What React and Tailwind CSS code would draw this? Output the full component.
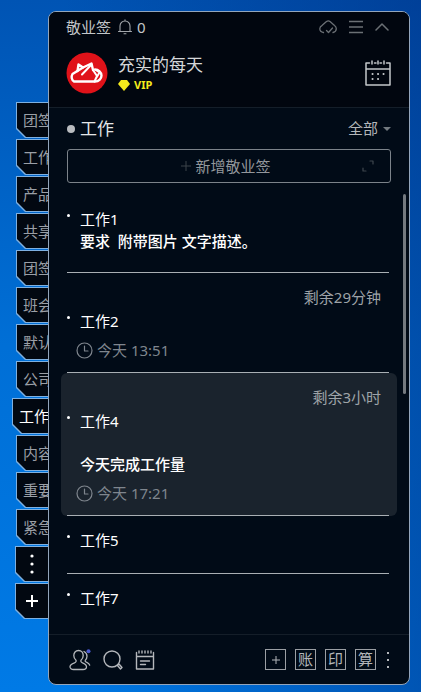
import React, { useState } from 'react';
import clsx from 'clsx';

const folders = ['团签', '工作', '产品', '共享', '团签', '班会', '默认', '公司', '工作', '内容', '重要', '紧急'];

const notes = [
  { id: 1, title: '工作1', body: '要求  附带图片 文字描述。' },
  { id: 2, title: '工作2', left: '剩余29分钟', time: '今天 13:51' },
  { id: 4, title: '工作4', body: '今天完成工作量', left: '剩余3小时', time: '今天 17:21', selected: true },
  { id: 5, title: '工作5' },
  { id: 7, title: '工作7' },
];

function Icon({ children, className, box = 24, stroke = 1.3 }) {
  return (
    <svg
      viewBox={`0 0 ${box} ${box}`}
      className={className}
      fill="none"
      stroke="currentColor"
      strokeWidth={stroke}
      strokeLinecap="round"
      strokeLinejoin="round"
      aria-hidden="true"
    >
      {children}
    </svg>
  );
}

function SideTab({ active, wide, label, onClick, children }) {
  return (
    <button
      onClick={onClick}
      aria-label={label}
      className={clsx(
        'h-9 shrink-0 bg-[#7fb0e0] p-px pr-0 text-[15px]',
        '[clip-path:polygon(0_0,100%_0,100%_100%,9px_100%,0_calc(100%-9px))]',
        active ? 'w-9 text-white' : wide ? 'w-[33px] text-white' : 'w-8 text-[#9a9fa6]'
      )}
    >
      <span
        className={clsx(
          'flex h-full items-center overflow-hidden bg-[#020811] whitespace-nowrap',
          '[clip-path:polygon(0_0,100%_0,100%_100%,9px_100%,0_calc(100%-9px))]',
          wide ? 'justify-center' : 'pl-1.5'
        )}
      >
        {children}
      </span>
    </button>
  );
}

function Note({ note }) {
  return (
    <li className={clsx('mx-3 rounded-md', note.selected && 'bg-[#1a232d]')}>
      <div className={clsx('mr-2 ml-1.5 border-[#a9afb4]', note.id !== 7 && 'border-b')}>
        {note.left && (
          <p className="pt-3 pr-2 text-right leading-6 text-[#9ea3a8]">{note.left}</p>
        )}
        <div className={clsx('flex', note.left ? 'pt-px pb-1.5' : note.body ? 'pt-[25px] pb-5' : 'pt-[13px] pb-[22px]')}>
          <span className="mt-1.5 h-[3px] w-[3px] rounded-full bg-white" />
          <div className="ml-2.5 text-white">
            <h3 className="leading-[22px]">{note.title}</h3>
            {note.body && (
              <p className={clsx('leading-[22px] font-medium whitespace-pre', note.left && 'mt-[21px]')}>
                {note.body}
              </p>
            )}
          </div>
        </div>
        {note.time && (
          <p className="flex items-center gap-1 pb-2.5 pl-[9px] leading-6 text-[#7f868e]">
            <Icon className="size-[17px]" box={17} stroke={1.2}>
              <circle cx="8.5" cy="8.5" r="7.5" />
              <path d="M8.5 4v5H12" />
            </Icon>
            {note.time}
          </p>
        )}
      </div>
    </li>
  );
}

function App() {
  const [tab, setTab] = useState(8);
  const [filter, setFilter] = useState('all');

  return (
    <div className="flex min-h-screen items-stretch bg-[linear-gradient(to_right,transparent_15%,rgba(0,40,120,0.45)),linear-gradient(to_bottom,#0054b4,#006fd6_50%,#007ae6)] text-[15px] font-['Noto_Sans','Noto_Sans_CJK_SC',sans-serif]">
      <nav className="flex w-12 shrink-0 flex-col items-end gap-px pt-[102px]">
        {folders.map((name, i) => (
          <SideTab key={i} active={tab === i} onClick={() => setTab(i)}>
            {name}
          </SideTab>
        ))}
        <div className="flex flex-col gap-px">
          <SideTab wide label="更多">
            <svg viewBox="0 0 4 20" className="h-5 w-1" fill="currentColor">
              <circle cx="2" cy="2" r="1.6" />
              <circle cx="2" cy="10" r="1.6" />
              <circle cx="2" cy="18" r="1.6" />
            </svg>
          </SideTab>
          <SideTab wide label="新建">
            <svg viewBox="0 0 12 12" className="size-3" stroke="currentColor" strokeWidth="2">
              <path d="M6 0v12M0 6h12" />
            </svg>
          </SideTab>
        </div>
      </nav>

      <div className="flex grow pt-[11px] pr-[11px] pb-[7px]">
        <main className="flex grow flex-col rounded-lg border border-[#93a5bb] bg-[#010b17]">
          <header className="rounded-t-[7px] border-b border-[#141e29] bg-[#01060f] pr-[18px] pl-[17px]">
            <div className="flex h-[30px] items-center pr-0.5 text-[#c3c6c9]">
              <h1>敬业签</h1>
              <button className="ml-1.5 flex items-center gap-1">
                <Icon className="size-4 text-[#a2a6ab]" box={16} stroke={1.1}>
                  <path d="M3 12.5V7a5 5 0 0 1 10 0v5.5M1.5 12.5h13M8 .8V2M7 14.8h2" />
                </Icon>
                0
              </button>
              <div className="ml-auto flex items-center gap-3 text-[#6b7075]">
                <button aria-label="同步">
                  <Icon className="size-[18px]" box={18} stroke={1.3}>
                    <path d="M4.5 14.5C2 14 .8 12.5.8 10.7c0-1.6 1-2.700 2.400-3.400L7.500 3.500c1-.8 2.500-.8 3.500 0l4.500 4c1.200.8 1.800 1.900 1.800 3.200 0 1.900-1.200 3.300-3.300 3.800M7.500 12.500l2 2 4-4.500" />
                  </Icon>
                </button>
                <button aria-label="菜单">
                  <Icon className="size-3.5" box={14}>
                    <path d="M0 1.5h14M0 7h14M0 12.5h14" />
                  </Icon>
                </button>
                <button aria-label="收起">
                  <Icon className="size-3.5" box={14} stroke={1.5}>
                    <path d="M1 10l6-6 6 6" />
                  </Icon>
                </button>
              </div>
            </div>
            <div className="flex h-[65px] items-center pb-[3px]">
              <svg viewBox="0 0 42 42" className="size-[42px]" aria-hidden="true">
                <circle cx="21" cy="21" r="20.5" fill="#e01219" />
                <g fill="none" stroke="#fff" strokeWidth="2.4" strokeLinejoin="round" strokeLinecap="round">
                  <path d="M11.500 19 12.500 12.500 17 15.500 25.500 11.500 27 18" />
                  <path d="M17 15.500 6.500 22c-1.500 2.500-1 6 1.500 7.500h21c4 0 6.500-3 6.500-6 0-3-3-6-6.500-6" />
                  <path d="M25.500 12.500 16 22.500M27 18l4 6-2.500 5.500M30 18l3.500 2.500-3 5" strokeWidth="2" />
                </g>
              </svg>
              <div className="ml-2.5">
                <h2 className="text-[17px] leading-6 text-[#d5d7d9]">充实的每天</h2>
                <p className="flex items-center gap-1 text-[11px] leading-4 font-bold text-[#f5ea1c]">
                  <svg viewBox="0 0 12 11" className="h-[11px] w-3" fill="currentColor">
                    <path d="M3 0h6l3 4-6 7-6-7z" />
                  </svg>
                  VIP
                </p>
              </div>
              <button aria-label="日历" className="ml-auto text-[#c4c7ca]">
                <Icon className="size-[26px]" box={26} stroke={1.5}>
                  <path d="M4.500 3H1v22h24V3h-3.500M9.500 3h1.500M15 3h1.500M1 9h24M7 1v3M13 1v3M19 1v3" />
                  <path strokeWidth="2" d="M7.500 14h.1M13 14h.1M18.500 14h.1M7.500 19h.1M13 19h.1" />
                </Icon>
              </button>
            </div>
          </header>

          <div className="flex h-[41px] items-center px-[18px]">
            <span className="size-2 rounded-full bg-[#b9bcc0]" />
            <h2 className="ml-[5px] text-[17px] text-[#e4e6e8]">工作</h2>
            <div className="relative ml-auto">
              <select
                aria-label="筛选"
                value={filter}
                onChange={e => setFilter(e.target.value)}
                className="appearance-none bg-transparent pr-3 text-[#b4b7ba] focus:outline-none"
              >
                <option value="all">全部</option>
              </select>
              <svg viewBox="0 0 8 4" className="pointer-events-none absolute top-1/2 right-0 h-1 w-2 -translate-y-1/2" fill="#737a80">
                <path d="M0 0h8L4 4z" />
              </svg>
            </div>
          </div>

          <button className="mx-[18px] flex h-[34px] items-center rounded-[3px] border border-[#7c838a] px-4 text-[#93979c]">
            <span className="flex grow items-center justify-center gap-1 pl-1.5">
              <Icon className="size-2.5 text-[#3d444b]" box={10} stroke={1}>
                <path d="M5 0v10M0 5h10" />
              </Icon>
              新增敬业签
            </span>
            <Icon className="size-3 text-[#3f474e]" box={12} stroke={1.2}>
              <path d="M8 1h3v3M1 8v3h3" />
            </Icon>
          </button>

          <section className="relative grow">
            <ul>
              {notes.map(note => (
                <Note key={note.id} note={note} />
              ))}
            </ul>
            <div className="absolute top-[11px] right-[3px] h-[200px] w-[3px] rounded-full bg-[#747a80]" />
          </section>

          <footer className="flex h-[50px] items-center border-t border-[#141e29] pr-[18px] pl-5 text-[#b4b7bb]">
            <div className="flex items-center gap-3">
              <button aria-label="团队">
                <Icon className="size-[22px]" box={22} stroke={1.3}>
                  <path d="M9.500 1.500c3 0 4.700 2.200 4.700 5 0 2-.9 3.700-2.200 4.800-.5 1 .2 2 1.500 2.500 2.500.9 4 2 4 4 0 1.500-1.500 2.700-3.500 2.700H4.500c-2 0-3.500-1.200-3.500-2.700 0-2 2-3.100 4.500-4 1.300-.5 2-1.500 1.500-2.500-1.300-1.100-2.200-2.800-2.200-4.800 0-2.800 1.700-5 4.700-5zM15 2.500c2 1 3 2.600 3 4.700 0 1.800-.8 3.200-1.800 4.200-.3.700.3 1.300 1.200 1.800 1.700.8 3 1.600 3.300 3" />
                  <circle cx="19.500" cy="2.200" r="2" fill="#4a5ad0" stroke="none" />
                </Icon>
              </button>
              <button aria-label="搜索">
                <Icon className="size-5" box={20} stroke={1.4}>
                  <circle cx="9" cy="9" r="8" />
                  <path d="M14.500 15.500l1.500-1.500 3 3.500-1.500 1.500z" />
                </Icon>
              </button>
              <button aria-label="便签">
                <Icon className="size-5" box={20} stroke={1.4}>
                  <path d="M1.500 2.500V19h17V2.500M1.500 6.500h17M4 1v2M7 1v2M10 1v2M13 1v2M16 1v2M5.500 11h9M5.500 14.500h5" />
                </Icon>
              </button>
            </div>
            <div className="ml-auto flex items-center gap-[9px]">
              <button aria-label="添加" className="flex size-[21px] items-center justify-center border border-[#9b9fa4]">
                <Icon className="size-2" box={8} stroke={1}>
                  <path d="M4 0v8M0 4h8" />
                </Icon>
              </button>
              {['账', '印', '算'].map(t => (
                <button key={t} className="flex size-[21px] items-center justify-center border border-[#9b9fa4] leading-none">
                  {t}
                </button>
              ))}
              <button aria-label="更多工具">
                <svg viewBox="0 0 6 18" className="h-[18px] w-1.5" fill="currentColor">
                  <rect x="2" y="1" width="2" height="2" />
                  <rect x="2" y="8" width="2" height="2" />
                  <rect x="2" y="15" width="2" height="2" />
                </svg>
              </button>
            </div>
          </footer>
        </main>
      </div>
    </div>
  );
}

export default App;
